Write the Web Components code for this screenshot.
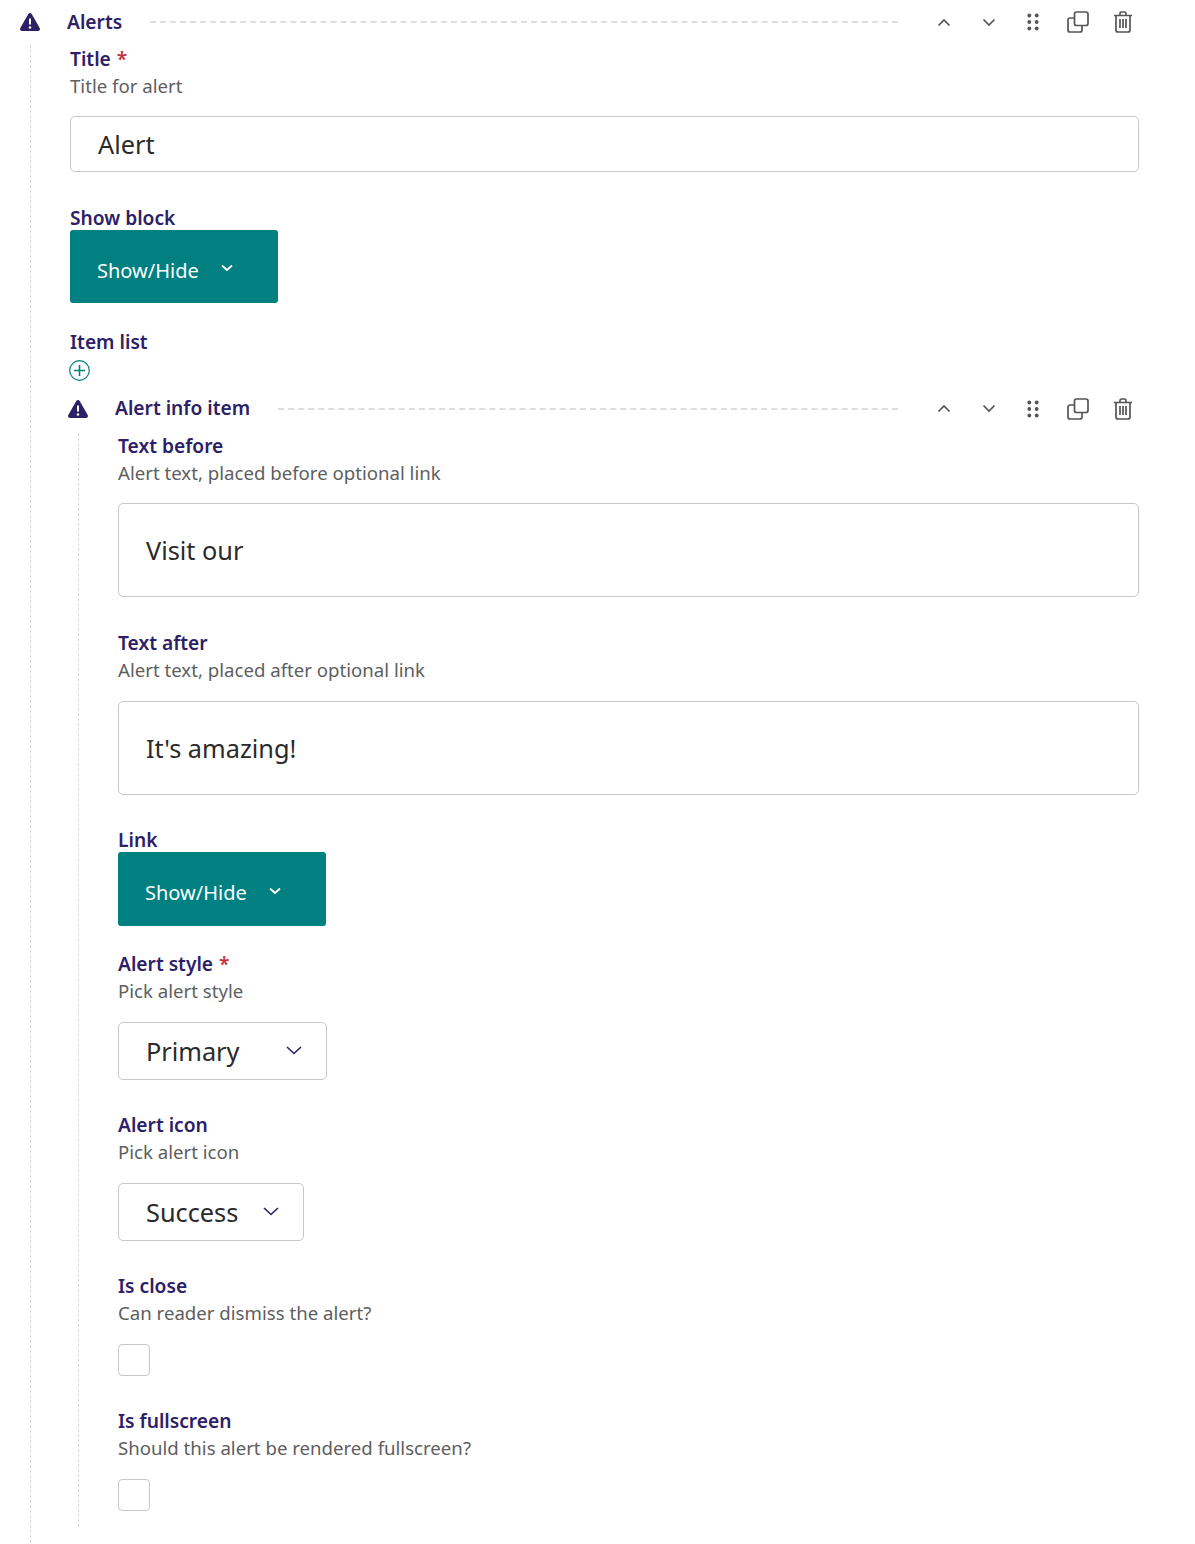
<!DOCTYPE html>
<html lang="en">
<head>
<meta charset="utf-8">
<title>Alerts</title>
<style>
  html, body { margin: 0; padding: 0; background: #fff; }
  body { font-family: "Noto Sans", sans-serif; color: #212121; padding-top: 1px; }
</style>
</head>
<body>
<edit-block title="Alerts">
  <form-field label="Title" required desc="Title for alert">
    <text-input value="Alert"></text-input>
  </form-field>
  <form-field label="Show block" tight>
    <show-hide></show-hide>
  </form-field>
  <form-field label="Item list" list>
    <add-button></add-button>
    <edit-block nested title="Alert info item">
      <form-field label="Text before" desc="Alert text, placed before optional link">
        <text-input tall value="Visit our"></text-input>
      </form-field>
      <form-field label="Text after" desc="Alert text, placed after optional link">
        <text-input tall value="It's amazing!"></text-input>
      </form-field>
      <form-field label="Link" tight>
        <show-hide></show-hide>
      </form-field>
      <form-field label="Alert style" required desc="Pick alert style">
        <select-box value="Primary" style="width:209px"></select-box>
      </form-field>
      <form-field label="Alert icon" desc="Pick alert icon">
        <select-box value="Success" style="width:186px"></select-box>
      </form-field>
      <form-field label="Is close" desc="Can reader dismiss the alert?">
        <check-box></check-box>
      </form-field>
      <form-field label="Is fullscreen" desc="Should this alert be rendered fullscreen?" last>
        <check-box></check-box>
      </form-field>
    </edit-block>
  </form-field>
</edit-block>

<script>
const blockTemplate = document.createElement('template');
blockTemplate.innerHTML = `
  <style>
    :host { display: block; padding-right: 56px; }
    :host([nested]) { padding-right: 0; margin-left: -22px; }
    header { display: flex; align-items: center; height: 42px; padding-left: 20px; margin-bottom: 2px; }
    :host([nested]) header { height: 44px; margin-bottom: 2.800px; }
    .warn { width: 20px; height: 18px; flex: none; display: block; }
    h2 {
      margin: -2px 28px 0 27px;
      font-size: 19.200px;
      line-height: 27px;
      font-weight: 600;
      color: #2d2066;
      white-space: nowrap;
    }
    .rule { flex: 1; border-top: 2px dashed #dedede; height: 0; }
    .actions { display: flex; margin-left: 23px; margin-right: -6.500px; }
    .actions button {
      width: 45px; height: 32px; padding: 0; border: 0; background: none;
      display: flex; align-items: center; justify-content: center;
    }
    .actions button.shift svg { margin-left: 2px; }
    svg { display: block; }
    .children {
      margin-left: 30px;
      border-left: 1px dashed #d9d9d9;
      padding-left: 39px;
      padding-top: 2.400px;
      padding-bottom: 16px;
    }
    :host([nested]) .children { padding-top: 1px; padding-bottom: 16px; }
  </style>
  <header>
    <svg class="warn" viewBox="0 0 20 18">
      <path fill="#2d2066" fill-rule="evenodd" d="M10 0c.7 0 1.300.4 1.700 1l8 14c.7 1.300-.2 3-1.700 3H2c-1.500 0-2.400-1.700-1.700-3l8-14c.4-.6 1-1 1.700-1zM9 5.500v6h2v-6H9zm1 7.700a1.300 1.300 0 1 0 0 2.600 1.300 1.300 0 0 0 0-2.600z"/>
    </svg>
    <h2></h2>
    <div class="rule"></div>
    <div class="actions">
      <button class="shift" aria-label="Move up"><svg width="14" height="9" viewBox="0 0 14 9"><path d="M1.500 7.500 7 2l5.500 5.500" fill="none" stroke="#555" stroke-width="1.700"/></svg></button>
      <button class="shift" aria-label="Move down"><svg width="14" height="9" viewBox="0 0 14 9"><path d="M1.500 1.500 7 7l5.500-5.500" fill="none" stroke="#555" stroke-width="1.700"/></svg></button>
      <button aria-label="Drag"><svg width="14" height="18" viewBox="0 0 14 18" fill="#555"><circle cx="3.300" cy="2.500" r="1.900"/><circle cx="10.700" cy="2.500" r="1.900"/><circle cx="3.300" cy="9" r="1.900"/><circle cx="10.700" cy="9" r="1.900"/><circle cx="3.300" cy="15.500" r="1.900"/><circle cx="10.700" cy="15.500" r="1.900"/></svg></button>
      <button aria-label="Duplicate"><svg width="22" height="22" viewBox="0 0 22 22" fill="none" stroke="#555" stroke-width="1.700"><rect x="7.500" y="1" width="13.500" height="13.500" rx="2"/><path d="M7.500 7H3a2 2 0 0 0-2 2v10a2 2 0 0 0 2 2h10a2 2 0 0 0 2-2v-4.500"/></svg></button>
      <button aria-label="Delete"><svg width="20" height="22" viewBox="0 0 20 22" fill="none" stroke="#555" stroke-width="1.700"><path d="M1 4.500h18M7 4V2.500A1.500 1.500 0 0 1 8.500 1h3A1.500 1.500 0 0 1 13 2.500V4M3 4.500V19a2 2 0 0 0 2 2h10a2 2 0 0 0 2-2V4.500M7 8v9M10 8v9M13 8v9"/></svg></button>
    </div>
  </header>
  <div class="children"><slot></slot></div>
`;

class EditBlock extends HTMLElement {
  constructor() {
    super();
    this.attachShadow({ mode: 'open' });
    this.shadowRoot.appendChild(blockTemplate.content.cloneNode(true));
  }
  connectedCallback() {
    this.shadowRoot.querySelector('h2').textContent = this.getAttribute('title');
  }
}

const fieldTemplate = document.createElement('template');
fieldTemplate.innerHTML = `
  <style>
    :host { display: block; margin-bottom: 34.200px; }
    :host([tight]) { margin-bottom: 27.200px; }
    :host([list]), :host([last]) { margin-bottom: 0; }
    .label {
      margin-top: -1px;
      font-size: 19.200px;
      line-height: 23px;
      font-weight: 600;
      color: #2d2066;
    }
    :host([tight]) .label { margin-bottom: 1px; }
    :host(:first-child) .label { margin-top: 0; }
    .req { color: #c8303a; margin-left: 1px; }
    .desc {
      font-size: 18.640px;
      line-height: 32px;
      color: #5e5e5e;
      margin-bottom: 15px;
    }
    :host(:first-child) .desc { margin-bottom: 14px; }
  </style>
  <div class="label"><span class="text"></span><span class="req"></span></div>
  <div class="desc"></div>
  <slot></slot>
`;

class FormField extends HTMLElement {
  constructor() {
    super();
    this.attachShadow({ mode: 'open' });
    this.shadowRoot.appendChild(fieldTemplate.content.cloneNode(true));
  }
  connectedCallback() {
    const root = this.shadowRoot;
    root.querySelector('.text').textContent = this.getAttribute('label');
    if (this.hasAttribute('required')) root.querySelector('.req').textContent = ' *';
    const desc = root.querySelector('.desc');
    if (this.hasAttribute('desc')) desc.textContent = this.getAttribute('desc');
    else desc.remove();
  }
}

const inputTemplate = document.createElement('template');
inputTemplate.innerHTML = `
  <style>
    :host {
      display: flex; align-items: center; box-sizing: border-box;
      height: 56px; padding-left: 27px;
      border: 1px solid #c8c8c8; border-radius: 5px; background: #fff;
      font-size: 25.300px; color: #2a2a2a;
    }
    :host([tall]) { height: 94px; }
  </style>
  <span></span>
`;

class TextInput extends HTMLElement {
  constructor() {
    super();
    this.attachShadow({ mode: 'open' });
    this.shadowRoot.appendChild(inputTemplate.content.cloneNode(true));
  }
  connectedCallback() {
    this.shadowRoot.querySelector('span').textContent = this.getAttribute('value');
  }
}

const toggleTemplate = document.createElement('template');
toggleTemplate.innerHTML = `
  <style>
    :host {
      display: flex; align-items: center; box-sizing: border-box;
      width: 208px; height: 73.800px; padding: 8px 0 0 27px;
      background: #008080; border-radius: 3px; color: #fff; font-size: 20px;
    }
    svg { display: block; margin: -4px 0 0 22px; }
  </style>
  <span>Show/Hide</span>
  <svg width="12" height="8" viewBox="0 0 12 8"><path d="M1 1.500 6 6l5-4.500" fill="none" stroke="#fff" stroke-width="1.800"/></svg>
`;

class ShowHide extends HTMLElement {
  constructor() {
    super();
    this.attachShadow({ mode: 'open' });
    this.shadowRoot.appendChild(toggleTemplate.content.cloneNode(true));
  }
}

const selectTemplate = document.createElement('template');
selectTemplate.innerHTML = `
  <style>
    :host {
      display: flex; align-items: center; justify-content: space-between; box-sizing: border-box;
      height: 58px; padding: 0 24px 0 27px;
      border: 1px solid #c8c8c8; border-radius: 5px; background: #fff;
      font-size: 25.300px; color: #2a2a2a;
    }
    svg { display: block; margin-top: -1px; }
  </style>
  <span></span>
  <svg width="16" height="9" viewBox="0 0 16 9"><path d="M1 1 8 7.500 15 1" fill="none" stroke="#2d2066" stroke-width="1.600"/></svg>
`;

class SelectBox extends HTMLElement {
  constructor() {
    super();
    this.attachShadow({ mode: 'open' });
    this.shadowRoot.appendChild(selectTemplate.content.cloneNode(true));
  }
  connectedCallback() {
    this.shadowRoot.querySelector('span').textContent = this.getAttribute('value');
  }
}

class CheckBox extends HTMLElement {
  constructor() {
    super();
    this.attachShadow({ mode: 'open' }).innerHTML = `
      <style>
        :host {
          display: block; box-sizing: border-box; width: 32px; height: 32px;
          border: 1px solid #c8c8c8; border-radius: 4px; background: #fff;
        }
      </style>`;
  }
}

class AddButton extends HTMLElement {
  constructor() {
    super();
    this.attachShadow({ mode: 'open' }).innerHTML = `
      <style>
        :host { display: block; width: 21px; height: 21px; margin: 7.400px 0 5.600px -1px; }
        svg { display: block; }
      </style>
      <svg width="21" height="21" viewBox="0 0 21 21" fill="none" stroke="#008080">
        <circle cx="10.500" cy="10.500" r="9.800" stroke-width="1.200"/>
        <path d="M10.500 5v11M5 10.500h11" stroke-width="1.600"/>
      </svg>`;
  }
}

customElements.define('edit-block', EditBlock);
customElements.define('form-field', FormField);
customElements.define('text-input', TextInput);
customElements.define('show-hide', ShowHide);
customElements.define('select-box', SelectBox);
customElements.define('check-box', CheckBox);
customElements.define('add-button', AddButton);
</script>
</body>
</html>
